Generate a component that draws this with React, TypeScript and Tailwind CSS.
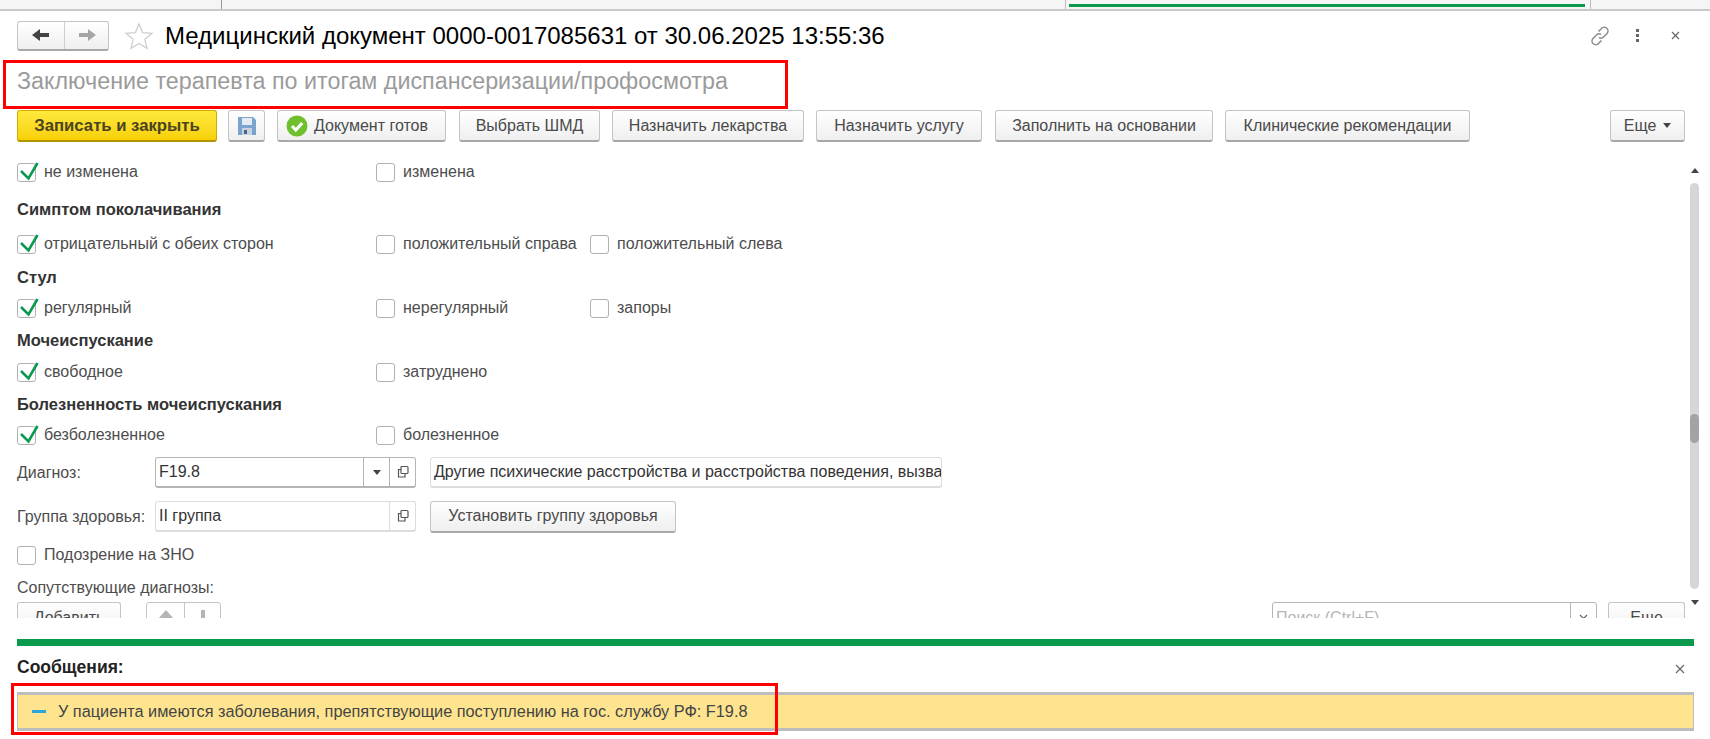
import { ReactNode } from "react";

const Btn = ({ children, className = "" }: { children: ReactNode; className?: string }) => (
  <div className={`flex h-[32px] shrink-0 items-center justify-center rounded-[3px] border border-[#c4c4c4] border-b-2 border-b-[#a8a8a8] bg-gradient-to-b from-white to-[#efefef] text-[16px] text-[#4a4a4a] ${className}`}>
    {children}
  </div>
);

const Check = ({ checked, label, className = "" }: { checked?: boolean; label: string; className?: string }) => (
  <div className={`flex h-6 items-center ${className}`}>
    <div className="relative h-[19px] w-[19px] shrink-0 rounded-[3px] border border-[#b0b0b0] bg-white">
      {checked && (
        <svg className="absolute -top-[4px] left-[1px]" width="22" height="22" viewBox="0 0 22 22">
          <path d="M2 11l7.5 7.5L18.5 3" fill="none" stroke="#0a9a4e" strokeWidth="2.6" />
        </svg>
      )}
    </div>
    <span className="ml-[8px] whitespace-nowrap text-[16px] text-[#4d4d4d]">{label}</span>
  </div>
);

const CheckRow = ({ items, className = "" }: { items: { label: string; checked?: boolean }[]; className?: string }) => (
  <div className={`grid grid-cols-[359px_214px_1fr] ${className}`}>
    {items.map((item) => (
      <Check key={item.label} label={item.label} checked={item.checked} />
    ))}
  </div>
);

const Heading = ({ children, className = "" }: { children: ReactNode; className?: string }) => (
  <div className={`flex h-6 items-center text-[16.5px] font-bold text-[#333] ${className}`}>{children}</div>
);

const OpenIcon = () => (
  <svg width="14" height="14" viewBox="0 0 14 14" fill="none" stroke="#555" strokeWidth="1.2">
    <rect x="5" y="1.5" width="7" height="7" rx="1" />
    <path d="M5 4.5H2.5v7.5h6.5V9" />
  </svg>
);

const Caret = ({ color = "#444" }: { color?: string }) => (
  <svg width="8" height="5" viewBox="0 0 8 5">
    <path d="M0 0h8L4 5z" fill={color} />
  </svg>
);

export default function App() {
  return (
    <div className="relative h-[739px] w-[1710px] overflow-hidden bg-white font-['Liberation_Sans',Arial,sans-serif]">
      {/* tab strip */}
      <div className="flex h-[11px] border-b-2 border-[#c9c9c9] bg-[#f5f5f5]">
        <div className="w-[222px] border-r border-[#999]" />
        <div className="w-[844px] border-r border-[#bbb]" />
        <div className="w-[525px] border-r border-[#bbb] pl-[3px] pr-[5px] pt-[4px]">
          <div className="h-[3px] bg-[#0a9a4e]" />
        </div>
      </div>

      {/* title */}
      <div className="flex h-[49px] items-center pl-[17px] pr-[30px]">
        <div className="flex h-[30px] w-[92px] rounded-[3px] border border-[#c4c4c4] border-b-2 border-b-[#a8a8a8] bg-gradient-to-b from-white to-[#efefef]">
          <div className="flex w-[47px] items-center justify-center border-r border-[#cfcfcf]">
            <svg width="18" height="14" viewBox="0 0 18 14">
              <path d="M0 7l8-6v4h9v4H8v4z" fill="#444" />
            </svg>
          </div>
          <div className="flex flex-1 items-center justify-center">
            <svg width="18" height="14" viewBox="0 0 18 14">
              <path d="M18 7l-8-6v4H1v4h9v4z" fill="#a5a5a5" />
            </svg>
          </div>
        </div>
        <svg className="ml-[15px]" width="30" height="28" viewBox="0 0 30 28" fill="none" stroke="#cfcfcf" strokeWidth="1.3">
          <path d="M15 2l3.6 8.6 9.4.7-7.2 6 2.3 9.1L15 21.5l-8.1 4.9 2.3-9.1-7.2-6 9.4-.7z" />
        </svg>
        <h1 className="ml-[11px] whitespace-nowrap text-[24px] text-black">Медицинский документ 0000-0017085631 от 30.06.2025 13:55:36</h1>
        <div className="ml-auto flex items-center">
          <svg width="22" height="22" viewBox="0 0 22 22" fill="none" stroke="#8a8a8a" strokeWidth="1.5">
            <path d="M9.5 6.5l3-3a3.6 3.6 0 0 1 5.5 5l-3.5 3.5a3.6 3.6 0 0 1-4.5.5" />
            <path d="M12.5 15.5l-3 3a3.6 3.6 0 0 1-5.5-5L7.5 10a3.6 3.6 0 0 1 4.5-.5" />
          </svg>
          <div className="ml-[25px] flex w-[3px] flex-col gap-[2px]">
            <div className="h-[3px] bg-[#666]" />
            <div className="h-[3px] bg-[#666]" />
            <div className="h-[3px] bg-[#666]" />
          </div>
          <svg className="ml-[32px]" width="9" height="9" viewBox="0 0 9 9" stroke="#666" strokeWidth="1.2">
            <path d="M1 1l7 7M8 1l-7 7" />
          </svg>
        </div>
      </div>

      {/* subtitle */}
      <div className="flex h-[50px] items-start pl-[17px] pt-[7px] text-[23.3px] leading-[28px] text-[#9b9b9b]">
        Заключение терапевта по итогам диспансеризации/профосмотра
      </div>

      {/* toolbar */}
      <div className="flex pl-[17px]">
        <div className="flex h-[32px] w-[200px] shrink-0 items-center justify-center rounded-[3px] border border-[#d0ad00] border-b-2 border-b-[#b39400] bg-gradient-to-b from-[#ffe93a] to-[#f7d000] text-[16.7px] font-bold text-[#4a4420]">
          Записать и закрыть
        </div>
        <Btn className="ml-[11px] w-[37px]">
          <svg width="20" height="20" viewBox="0 0 20 20">
            <path d="M1 1h15l3 3v15H1z" fill="#7ba3cf" />
            <rect x="5" y="2" width="10" height="7" fill="#e4ebf3" />
            <rect x="5" y="12" width="10" height="7" fill="#c9d2dc" />
            <rect x="7" y="14" width="3" height="4" fill="#44678f" />
          </svg>
        </Btn>
        <Btn className="ml-[12px] w-[169px] !justify-start gap-[6px] pl-[8px]">
          <svg width="22" height="22" viewBox="0 0 22 22">
            <circle cx="11" cy="11" r="10.5" fill="#6fc02c" />
            <path d="M6 11l3.8 4 6.4-7" fill="none" stroke="#fff" strokeWidth="3" />
          </svg>
          Документ готов
        </Btn>
        <Btn className="ml-[13px] w-[141px]">Выбрать ШМД</Btn>
        <Btn className="ml-[12px] w-[192px]">Назначить лекарства</Btn>
        <Btn className="ml-[12px] w-[166px]">Назначить услугу</Btn>
        <Btn className="ml-[13px] w-[218px]">Заполнить на основании</Btn>
        <Btn className="ml-[12px] w-[245px]">Клинические рекомендации</Btn>
        <Btn className="ml-[140px] w-[75px] gap-[7px]">
          Еще <Caret />
        </Btn>
      </div>

      {/* form */}
      <div className="mt-[8px] flex h-[471px] pl-[17px]">
        <div className="w-[1673px] pt-[10px]">
          <CheckRow items={[{ label: "не изменена", checked: true }, { label: "изменена" }]} />
          <Heading className="mt-[13px]">Симптом поколачивания</Heading>
          <CheckRow className="mt-[11px]" items={[{ label: "отрицательный с обеих сторон", checked: true }, { label: "положительный справа" }, { label: "положительный слева" }]} />
          <Heading className="mt-[9px]">Стул</Heading>
          <CheckRow className="mt-[7px]" items={[{ label: "регулярный", checked: true }, { label: "нерегулярный" }, { label: "запоры" }]} />
          <Heading className="mt-[8px]">Мочеиспускание</Heading>
          <CheckRow className="mt-[8px]" items={[{ label: "свободное", checked: true }, { label: "затруднено" }]} />
          <Heading className="mt-[8px]">Болезненность мочеиспускания</Heading>
          <CheckRow className="mt-[7px]" items={[{ label: "безболезненное", checked: true }, { label: "болезненное" }]} />

          <div className="mt-[10px] flex h-[31px] items-center text-[16px] text-[#4d4d4d]">
            <span className="w-[138px]">Диагноз:</span>
            <div className="flex h-full w-[261px] rounded-[3px] border border-[#b5b5b5] border-b-2 pl-[3px] text-[#333]">
              <span className="flex-1 self-center">F19.8</span>
              <div className="flex w-[26px] items-center justify-center border-l border-[#b5b5b5]">
                <Caret />
              </div>
              <div className="flex w-[26px] items-center justify-center border-l border-[#b5b5b5]">
                <OpenIcon />
              </div>
            </div>
            <div className="ml-[14px] flex h-full w-[512px] items-center overflow-hidden whitespace-nowrap rounded-[3px] border border-[#dcdcdc] border-b-2 px-[3px] text-[#333]">
              Другие психические расстройства и расстройства поведения, вызванные
            </div>
          </div>

          <div className="mt-[13px] flex h-[31px] items-center text-[16px] text-[#4d4d4d]">
            <span className="w-[138px] whitespace-nowrap">Группа здоровья:</span>
            <div className="flex h-full w-[261px] rounded-[3px] border border-[#dcdcdc] border-b-2 pl-[3px] text-[#333]">
              <span className="flex-1 self-center">II группа</span>
              <div className="flex w-[26px] items-center justify-center border-l border-[#dcdcdc]">
                <OpenIcon />
              </div>
            </div>
            <Btn className="ml-[14px] w-[246px]">Установить группу здоровья</Btn>
          </div>

          <Check className="mt-[11px]" label="Подозрение на ЗНО" />
          <div className="mt-[9px] flex h-6 items-center text-[16px] text-[#4d4d4d]">Сопутствующие диагнозы:</div>

          {/* table toolbar, cut off by the bottom of the form */}
          <div className="mt-[2px] flex h-[16px] overflow-hidden pr-[5px]">
            <Btn className="w-[104px]">Добавить</Btn>
            <div className="ml-[25px] flex h-[32px] w-[75px] rounded-[3px] border border-[#c4c4c4]">
              <div className="flex w-[38px] justify-center border-r border-[#c4c4c4] pt-[7px]">
                <svg width="16" height="9" viewBox="0 0 16 9"><path d="M0 9L8 0l8 9z" fill="#b5b5b5" /></svg>
              </div>
              <div className="flex flex-1 justify-center pt-[7px]">
                <svg width="12" height="9" viewBox="0 0 12 9"><path d="M4 0h4v9H4z" fill="#b5b5b5" /></svg>
              </div>
            </div>
            <div className="ml-auto flex h-[32px] w-[325px] rounded-[3px] border border-[#b5b5b5] pl-[3px] text-[16px] text-[#b5b5b5]">
              <span className="flex-1 self-center">Поиск (Ctrl+F)</span>
              <div className="flex w-[26px] items-center justify-center border-l border-[#b5b5b5]">
                <svg width="9" height="9" viewBox="0 0 9 9" stroke="#666" strokeWidth="1.2"><path d="M1 1l7 7M8 1l-7 7" /></svg>
              </div>
            </div>
            <Btn className="ml-[11px] w-[77px]">Еще</Btn>
          </div>
        </div>

        {/* scrollbar */}
        <div className="flex w-[9px] flex-col items-center pt-[18px]">
          <div className="rotate-180">
            <Caret />
          </div>
          <div className="mt-[10px] h-[406px] w-[9px] rounded-[5px] bg-[#d6d6d6] pt-[231px]">
            <div className="h-[29px] rounded-[5px] bg-[#a3a3a3]" />
          </div>
          <div className="mt-[11px]">
            <Caret />
          </div>
        </div>
      </div>

      {/* messages */}
      <div className="mt-[18px] ml-[17px] w-[1677px]">
        <div className="h-[7px] bg-[#0a9a4e]" />
        <div className="flex h-[46px] items-center justify-between pr-[9px]">
          <span className="-mt-[3px] text-[17.5px] font-bold text-[#222]">Сообщения:</span>
          <svg width="10" height="10" viewBox="0 0 10 10" stroke="#666" strokeWidth="1.2"><path d="M1 1l8 8M9 1l-8 8" /></svg>
        </div>
        <div className="flex h-[39px] items-center border-y-[3px] border-x border-[#bdbdbd] bg-[#ffe48f] pl-[14px] text-[16.3px] text-[#444]">
          <div className="h-[3px] w-[14px] bg-[#2aa5dc]" />
          <span className="ml-[12px]">У пациента имеются заболевания, препятствующие поступлению на гос. службу РФ: F19.8</span>
        </div>
      </div>

      {/* red annotation frames drawn over the screenshot */}
      <div className="absolute left-[3px] top-[60px] h-[49px] w-[785px] border-[3px] border-[#ff0000]" />
      <div className="absolute left-[11px] top-[683px] h-[52px] w-[767px] border-[3px] border-[#ff0000]" />
    </div>
  );
}
